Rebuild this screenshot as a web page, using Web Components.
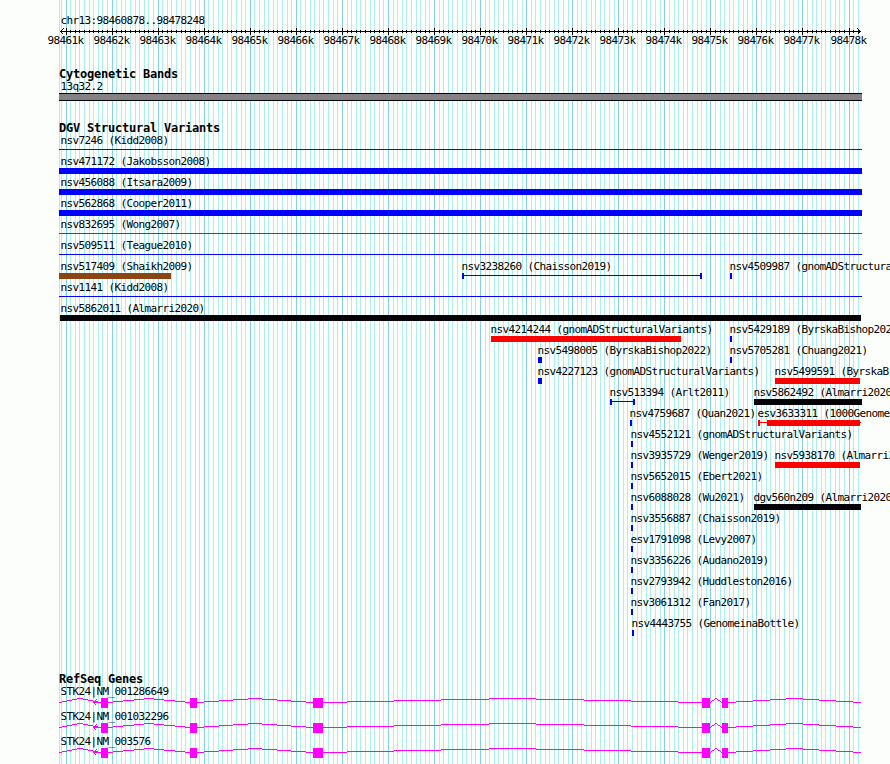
<!DOCTYPE html>
<html lang="en">
<head>
<meta charset="utf-8">
<title>chr13:98460878..98478248</title>
<style>
  html, body {
    margin: 0;
    width: 890px;
    height: 764px;
    overflow: hidden;
    background: #fcfefc;
  }
</style>
</head>
<body>
<genome-view>
  <scale-ruler region="chr13:98460878..98478248"></scale-ruler>
  <track-panel heading="Cytogenetic Bands" style="margin-top: 20px">
    <cyto-band name="13q32.2"></cyto-band>
  </track-panel>
  <track-panel id="dgv" heading="DGV Structural Variants" style="margin-top: 21px"></track-panel>
  <track-panel id="refseq" heading="RefSeq Genes" style="margin-top: 34px"></track-panel>
</genome-view>

<script>
const START = 98460878;
const LEFT = 59;
const RIGHT = 862;

// base position -> pixel column
function toX(pos) {
  return Math.round(59.95 + (pos - START) * 800 / 17370);
}

const labelCss = /* css */ `
  .label {
    font: 11px/12px "DejaVu Sans Mono", "Liberation Mono", monospace;
    letter-spacing: -0.622px;
    white-space: pre;
    color: #000;
  }
  svg {
    display: block;
    overflow: visible;
    shape-rendering: crispEdges;
  }
`;

class GenomeView extends HTMLElement {
  constructor() {
    super();
    this.attachShadow({ mode: "open" });
  }

  connectedCallback() {
    let lines = `<rect x="${LEFT}" width="1" height="764" fill="#afeeee"/>`;
    for (let pos = 98460900; pos <= 98478200; pos += 100) {
      const color = pos % 1000 === 0 ? "#87ceeb" : "#afeeee";
      lines += `<rect x="${toX(pos)}" width="1" height="764" fill="${color}"/>`;
    }
    this.shadowRoot.innerHTML = /* html */ `
      <style>
        :host {
          display: grid;
          width: 890px;
          height: 764px;
          overflow: hidden;
        }
        svg, .tracks {
          grid-area: 1 / 1;
        }
        svg {
          shape-rendering: crispEdges;
        }
        .tracks {
          display: flex;
          flex-direction: column;
          padding-top: 15px;
          min-width: 0;
        }
      </style>
      <svg width="890" height="764">${lines}</svg>
      <div class="tracks"><slot></slot></div>
    `;
  }
}

class ScaleRuler extends HTMLElement {
  constructor() {
    super();
    this.attachShadow({ mode: "open" });
  }

  connectedCallback() {
    let ticks = "";
    let labels = "";
    for (let pos = 98460900; pos <= 98478200; pos += 100) {
      const major = pos % 1000 === 0;
      ticks += `<rect x="${toX(pos)}" y="${major ? 1 : 3}" width="1" height="${major ? 7 : 3}"/>`;
      if (major) {
        labels += `<span class="label" style="margin-left: ${toX(pos) - 18.4}px">${pos / 1000}k</span>`;
      }
    }
    this.shadowRoot.innerHTML = /* html */ `
      <style>
        ${labelCss}
        :host {
          display: block;
          height: 33px;
        }
        .region {
          margin-left: 60.5px;
        }
        .numbers {
          display: grid;
          margin-top: -1px;
        }
        .numbers .label {
          grid-area: 1 / 1;
        }
      </style>
      <div class="label region">${this.getAttribute("region")}</div>
      <svg width="890" height="9">
        <rect x="60" y="4" width="801" height="1"/>
        ${ticks}
        <path d="M63.5 1.5L60.5 4.5L63.5 7.5M857.5 1.5L860.5 4.5L857.5 7.5" fill="none" stroke="#000"/>
      </svg>
      <div class="numbers">${labels}</div>
    `;
  }
}

class TrackPanel extends HTMLElement {
  constructor() {
    super();
    this.attachShadow({ mode: "open" });
  }

  connectedCallback() {
    this.shadowRoot.innerHTML = /* html */ `
      <style>
        :host {
          display: flex;
          flex-direction: column;
        }
        .heading {
          margin-left: 59px;
          font: bold 12px/13px "DejaVu Sans Mono", "Liberation Mono", monospace;
          letter-spacing: -0.225px;
          white-space: pre;
          color: #000;
        }
      </style>
      <div class="heading">${this.getAttribute("heading")}</div>
      <slot></slot>
    `;
  }
}

class CytoBand extends HTMLElement {
  constructor() {
    super();
    this.attachShadow({ mode: "open" });
  }

  connectedCallback() {
    this.shadowRoot.innerHTML = /* html */ `
      <style>
        ${labelCss}
        :host {
          display: block;
        }
        .label {
          margin-left: 60.5px;
        }
        .band {
          box-sizing: border-box;
          width: 803px;
          height: 8px;
          margin-left: 59px;
          border: solid #000;
          border-width: 1px 0;
          background: #848284;
        }
      </style>
      <div class="label">${this.getAttribute("name")}</div>
      <div class="band"></div>
    `;
  }
}

// One line of the variants track, several features may share it
class FeatureRow extends HTMLElement {
  constructor() {
    super();
    this.attachShadow({ mode: "open" });
  }

  connectedCallback() {
    this.shadowRoot.innerHTML = /* html */ `
      <style>
        :host {
          display: grid;
          height: 21px;
        }
        ::slotted(*) {
          grid-area: 1 / 1;
        }
      </style>
      <slot></slot>
    `;
  }
}

class VariantFeature extends HTMLElement {
  constructor() {
    super();
    this.attachShadow({ mode: "open" });
  }

  connectedCallback() {
    const from = Number(this.getAttribute("from"));
    const to = Number(this.getAttribute("to"));
    const width = to - from;
    const labelX = from <= 60 ? 60.5 : from - 0.5;
    const shapes = {
      bar: `<rect width="${width}" height="6"/>`,
      line: `<rect y="2" width="${width}" height="1"/>`,
      span: `<rect width="2" height="6"/><rect y="2" width="${width}" height="1"/>
             <rect x="${width - 2}" width="2" height="6"/>`,
      partial: `<rect width="2" height="6"/><rect y="2" width="${width}" height="1"/>
                <rect x="9" width="${width - 10}" height="6"/>`,
    };
    this.shadowRoot.innerHTML = /* html */ `
      <style>
        ${labelCss}
        :host {
          display: block;
        }
        .label {
          margin-left: ${labelX}px;
          height: 12px;
        }
        svg {
          margin-left: ${from}px;
        }
      </style>
      <div class="label"><slot></slot></div>
      <svg width="${width}" height="6" fill="${this.getAttribute("color")}">${shapes[this.getAttribute("glyph")]}</svg>
    `;
  }
}

class GeneModel extends HTMLElement {
  constructor() {
    super();
    this.attachShadow({ mode: "open" });
  }

  connectedCallback() {
    const exons = [[101, 108], [190, 197], [313, 323], [702, 710], [722, 728]];
    // introns rise to a peak half way between two exons
    const edges = [59, ...exons.flat(), 861];
    let shapes = "";
    for (let i = 0; i < edges.length; i += 2) {
      shapes += intron(edges[i], edges[i + 1]);
    }
    for (const [a, b] of exons) {
      shapes += `<rect x="${a}" width="${b - a}" height="10"/>`;
    }
    this.shadowRoot.innerHTML = /* html */ `
      <style>
        ${labelCss}
        :host {
          display: block;
          height: 25px;
        }
        .label {
          margin-left: 60.5px;
        }
      </style>
      <div class="label">${this.getAttribute("name")}</div>
      <svg width="890" height="10" fill="#ff00ff">
        ${shapes}
        <rect x="93" y="4" width="8" height="1"/>
        <path d="M96.5 1.5L93.5 4.5L96.5 7.5" fill="none" stroke="#ff00ff"/>
      </svg>
    `;
  }
}

// stepped one-pixel line, built column by column and merged into runs
function intron(a, b) {
  const mid = (a + b) / 2;
  const half = (b - a) / 2;
  let out = "";
  let runX = a;
  let runY = null;
  for (let x = a; x <= b; x++) {
    const y = x < b ? Math.round(4 * Math.abs(x + 0.5 - mid) / half) : -1;
    if (y !== runY) {
      if (runY !== null) {
        out += `<rect x="${runX}" y="${runY}" width="${x - runX}" height="1"/>`;
      }
      runX = x;
      runY = y;
    }
  }
  return out;
}

const BLUE = "#0000ff";
const RED = "#ff0000";
const BLACK = "#040204";
const BROWN = "#8b4513";
const INDIGO = "#4b0082";

// label, glyph, first column, end column, color
const rows = [
  [["nsv7246 (Kidd2008)", "line", LEFT, RIGHT, INDIGO]],
  [["nsv471172 (Jakobsson2008)", "bar", LEFT, RIGHT, BLUE]],
  [["nsv456088 (Itsara2009)", "bar", LEFT, RIGHT, BLUE]],
  [["nsv562868 (Cooper2011)", "bar", LEFT, RIGHT, BLUE]],
  [["nsv832695 (Wong2007)", "line", LEFT, RIGHT, RED]],
  [["nsv509511 (Teague2010)", "line", LEFT, RIGHT, BLUE]],
  [
    ["nsv517409 (Shaikh2009)", "bar", LEFT, 171, BROWN],
    ["nsv3238260 (Chaisson2019)", "span", 462, 702, BLUE],
    ["nsv4509987 (gnomADStructura", "bar", 730, 732, BLUE],
  ],
  [["nsv1141 (Kidd2008)", "line", LEFT, RIGHT, BLUE]],
  [["nsv5862011 (Almarri2020)", "bar", 60, 861, BLACK]],
  [
    ["nsv4214244 (gnomADStructuralVariants)", "bar", 491, 681, RED],
    ["nsv5429189 (ByrskaBishop202", "bar", 730, 732, BLUE],
  ],
  [
    ["nsv5498005 (ByrskaBishop2022)", "bar", 538, 542, BLUE],
    ["nsv5705281 (Chuang2021)", "bar", 730, 732, BLUE],
  ],
  [
    ["nsv4227123 (gnomADStructuralVariants)", "bar", 538, 542, BLUE],
    ["nsv5499591 (ByrskaB", "bar", 775, 860, RED],
  ],
  [
    ["nsv513394 (Arlt2011)", "span", 610, 635, BLUE],
    ["nsv5862492 (Almarri2020", "bar", 754, 862, BLACK],
  ],
  [
    ["nsv4759687 (Quan2021)", "bar", 630, 632, BLUE],
    ["esv3633311 (1000Genome", "partial", 758, 861, RED],
  ],
  [["nsv4552121 (gnomADStructuralVariants)", "bar", 631, 633, BLUE]],
  [
    ["nsv3935729 (Wenger2019)", "bar", 631, 633, BLUE],
    ["nsv5938170 (Almarri2", "bar", 775, 860, RED],
  ],
  [["nsv5652015 (Ebert2021)", "bar", 631, 633, BLUE]],
  [
    ["nsv6088028 (Wu2021)", "bar", 631, 633, BLUE],
    ["dgv560n209 (Almarri2020", "bar", 754, 861, BLACK],
  ],
  [["nsv3556887 (Chaisson2019)", "bar", 631, 633, BLUE]],
  [["esv1791098 (Levy2007)", "bar", 631, 633, BLUE]],
  [["nsv3356226 (Audano2019)", "bar", 631, 633, BLUE]],
  [["nsv2793942 (Huddleston2016)", "bar", 631, 633, BLUE]],
  [["nsv3061312 (Fan2017)", "bar", 631, 633, BLUE]],
  [["nsv4443755 (GenomeinaBottle)", "bar", 632, 634, BLUE]],
];

document.getElementById("dgv").innerHTML = rows.map((row) => `
  <feature-row>${row.map(([label, glyph, from, to, color]) => `
    <variant-feature glyph="${glyph}" from="${from}" to="${to}" color="${color}">${label}</variant-feature>`).join("")}
  </feature-row>`).join("");

document.getElementById("refseq").innerHTML = ["NM_001286649", "NM_001032296", "NM_003576"]
  .map((id) => `<gene-model name="STK24|${id}"></gene-model>`).join("");

customElements.define("genome-view", GenomeView);
customElements.define("scale-ruler", ScaleRuler);
customElements.define("track-panel", TrackPanel);
customElements.define("cyto-band", CytoBand);
customElements.define("feature-row", FeatureRow);
customElements.define("variant-feature", VariantFeature);
customElements.define("gene-model", GeneModel);
</script>
</body>
</html>
